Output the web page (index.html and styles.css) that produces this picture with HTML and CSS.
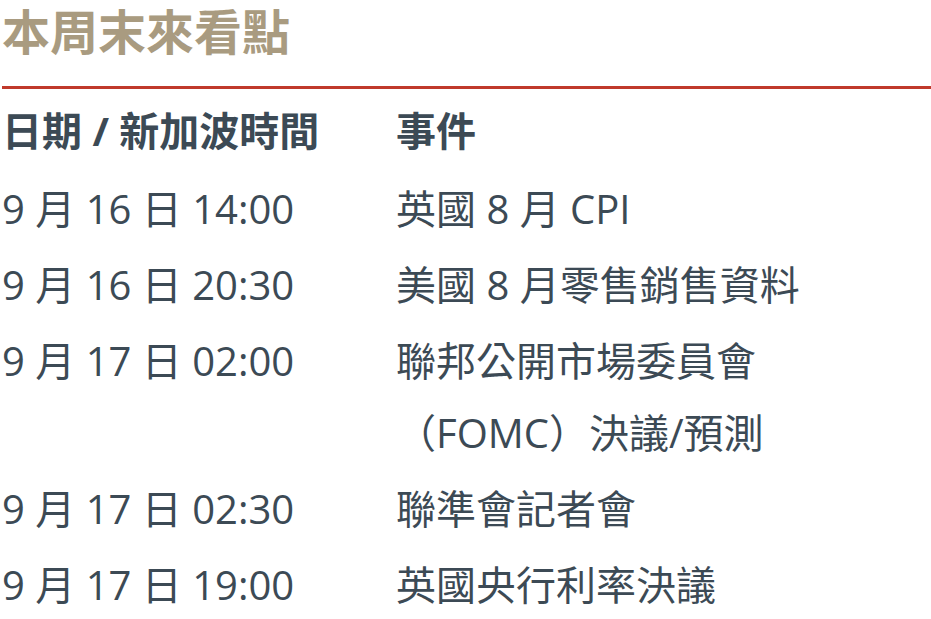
FILE: index.html
```html
<!DOCTYPE html>
<html lang="zh-Hant">
<head>
<meta charset="utf-8">
<title>本周末來看點</title>
<link rel="stylesheet" href="styles.css">
</head>
<body>
<section class="panel">
  <h2 class="title">本周末來看點</h2>
  <table class="events">
    <thead>
      <tr><th class="col-date">日期 / 新加波時間</th><th class="col-event">事件</th></tr>
    </thead>
    <tbody>
      <tr><td>9 月 16 日 14:00</td><td>英國 8 月 CPI</td></tr>
      <tr><td>9 月 16 日 20:30</td><td>美國 8 月零售銷售資料</td></tr>
      <tr><td>9 月 17 日 02:00</td><td>聯邦公開市場委員會（FOMC）決議/預測</td></tr>
      <tr><td>9 月 17 日 02:30</td><td>聯準會記者會</td></tr>
      <tr><td>9 月 17 日 19:00</td><td>英國央行利率決議</td></tr>
    </tbody>
  </table>
</section>
</body>
</html>
```
FILE: styles.css
```css
html, body {
  margin: 0;
  padding: 0;
  background: #ffffff;
}
.panel {
  padding: 0 0 0 2px;
  font-family: "Open Sans", "Noto Sans CJK TC", sans-serif;
  color: #3c4a55;
}
.title {
  margin: 0;
  font-size: 48px;
  line-height: 64px;
  font-weight: 700;
  color: #a99b80;
  padding-bottom: 22px;
  border-bottom: 3px solid #c0392b;
}
.events {
  border-collapse: collapse;
  margin-top: 4px;
  font-size: 40px;
  line-height: 72px;
}
.events th,
.events td {
  padding: 2px 0;
  text-align: left;
  vertical-align: top;
}
.events th {
  font-weight: 700;
  padding-bottom: 4px;
}
.col-date {
  width: 394px;
}
.col-event {
  width: 430px;
}
.events td {
  font-weight: 400;
}
```
